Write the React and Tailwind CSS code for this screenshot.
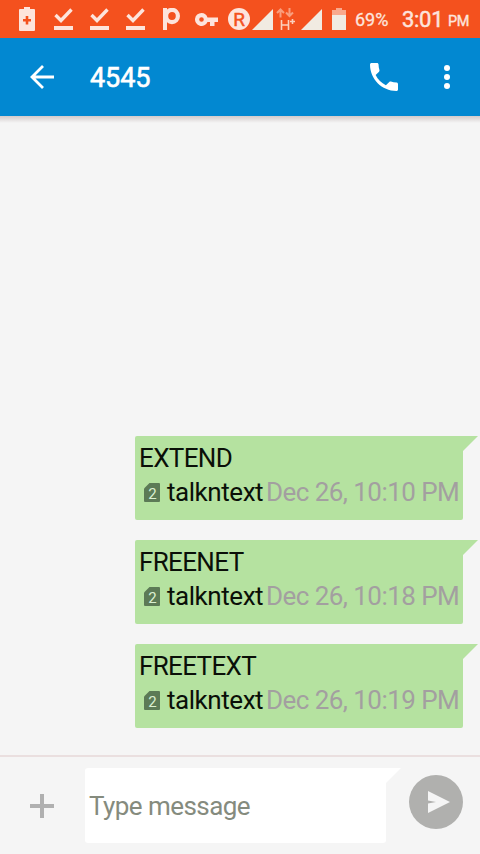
const messages = [
  { id: 1, text: 'EXTEND', sender: 'talkntext', date: 'Dec 26, 10:10 PM' },
  { id: 2, text: 'FREENET', sender: 'talkntext', date: 'Dec 26, 10:18 PM' },
  { id: 3, text: 'FREETEXT', sender: 'talkntext', date: 'Dec 26, 10:19 PM' },
];

function CheckLine({ className }) {
  return (
    <svg viewBox="0 0 20 22" className={`h-[22px] w-5 shrink-0 ${className}`}>
      <path d="M1.5 7l5.5 5.5L17.5 1.5" fill="none" stroke="currentColor" strokeWidth="3.4" />
      <path d="M0 18h19v4H0z" fill="currentColor" />
    </svg>
  );
}

function Signal({ className }) {
  return (
    <svg viewBox="0 0 21 21" className={`h-[21px] w-[21px] shrink-0 ${className}`}>
      <path d="M21 0v21H0z" fill="#f1ebe2" />
    </svg>
  );
}

function StatusBar() {
  return (
    <div className="flex h-[38px] shrink-0 items-center bg-[#f4511e] pl-[19px] text-[#fde4dc]">
      <svg viewBox="0 0 16 24" className="h-6 w-4 shrink-0">
        <path
          fillRule="evenodd"
          fill="currentColor"
          d="M5 0h6v2h4q1 0 1 1v20q0 1-1 1H1q-1 0-1-1V3q0-1 1-1h4zM6.7 9v3H4v2.6h2.7v3h2.6v-3H12V12H9.3V9z"
        />
      </svg>
      <CheckLine className="ml-[19px]" />
      <CheckLine className="ml-4" />
      <CheckLine className="ml-4" />
      <svg viewBox="0 0 17 22" className="ml-[17px] h-[22px] w-[17px] shrink-0">
        <path d="M0 0h4v22H0z" fill="currentColor" />
        <ellipse cx="9" cy="8" rx="5.9" ry="6.2" fill="none" stroke="currentColor" strokeWidth="4.2" />
      </svg>
      <svg viewBox="0 0 23 13" className="ml-[15px] h-[13px] w-[23px] shrink-0">
        <path
          fillRule="evenodd"
          fill="currentColor"
          d="M6.5 0a6.5 6.5 0 1 0 6 9H15v4h4.5V9H23V4.5H12.5a6.5 6.5 0 0 0-6-4.5zM6.5 4.2a2.3 2.3 0 1 1 0 4.6 2.3 2.3 0 0 1 0-4.6z"
        />
      </svg>
      <div className="ml-[10px] flex size-[22px] shrink-0 items-center justify-center rounded-full bg-[#fde4dc] text-[19px] leading-none text-[#f4511e] [-webkit-text-stroke:0.5px]">
        R
      </div>
      <Signal className="ml-[2px]" />
      <svg viewBox="0 0 19 22" className="ml-[3px] h-[22px] w-[19px] shrink-0" fill="none">
        <path d="M4.5 9.5V1.5M1 5l3.5-3.5L8 5M13.5 0v8M10 4.5L13.5 8 17 4.5" stroke="#f99e7e" strokeWidth="2" />
        <path d="M5.5 12v10M12.5 12v10M5.5 17h7M14 13.5h5M16.5 11v5" stroke="#fbd0bd" strokeWidth="1.6" />
      </svg>
      <Signal className="ml-[6px]" />
      <svg viewBox="0 0 14 22" className="ml-[10px] h-[22px] w-[14px] shrink-0">
        <path d="M4 0h6v2h4v6H0V2h4z" fill="#f9a98d" />
        <path d="M0 7h14v15H0z" fill="#f1ebe2" />
      </svg>
      <span className="ml-[9px] w-[38px] shrink-0 pt-px text-[18px] [-webkit-text-stroke:0.3px]">69%</span>
      <span className="ml-[9px] w-[41px] shrink-0 pt-px text-[22px] tracking-[-0.3px] [-webkit-text-stroke:0.5px]">3:01</span>
      <span className="ml-[5px] pt-[6px] text-[14.5px] tracking-[-0.4px] [-webkit-text-stroke:0.4px]">PM</span>
    </div>
  );
}

function AppBar() {
  return (
    <header className="flex h-[78px] shrink-0 items-center bg-[#0288d1] text-white">
      <svg viewBox="0 0 24 24" className="ml-[30px] size-6 shrink-0" fill="none" stroke="currentColor" strokeWidth="2.8">
        <path d="M24 12H2.5M13 1L2 12l11 11" />
      </svg>
      <h1 className="ml-9 flex-1 pt-[2px] text-[27px] tracking-[-0.1px] [-webkit-text-stroke:0.6px]">4545</h1>
      <svg viewBox="3 3 18 18" className="size-7 shrink-0" fill="currentColor">
        <path d="M6.62 10.79c1.44 2.83 3.76 5.14 6.59 6.59l2.2-2.2c.27-.27.67-.36 1.02-.24 1.12.37 2.33.57 3.57.57.55 0 1 .45 1 1V20c0 .55-.45 1-1 1-9.39 0-17-7.61-17-17 0-.55.45-1 1-1h3.5c.55 0 1 .45 1 1 0 1.25.2 2.45.57 3.57.11.35.03.74-.25 1.02l-2.2 2.2z" />
      </svg>
      <svg viewBox="0 0 6 24" className="mr-[30px] ml-[46px] h-6 w-1.5 shrink-0 overflow-visible" fill="currentColor">
        <circle cx="3" cy="3" r="3" />
        <circle cx="3" cy="12" r="3" />
        <circle cx="3" cy="21" r="3" />
      </svg>
    </header>
  );
}

function Message({ message }) {
  return (
    <div className="flex justify-end pr-0.5">
      <div className="h-[84px] w-[328px] rounded-[2px] rounded-tr-none bg-[#b5e2a0] pt-[5px] pl-[4px] text-[26px] leading-[34px] whitespace-nowrap text-[#0a0f08]">
        <p className="tracking-[-0.65px]">{message.text}</p>
        <div className="flex items-center">
          <svg viewBox="0 0 16 19" className="mr-[7px] ml-[5px] h-[19px] w-4 shrink-0">
            <path d="M5.5 0H15q1 0 1 1v17q0 1-1 1H1q-1 0-1-1V5.5z" fill="#5c7a56" />
            <text x="8.5" y="15.5" textAnchor="middle" fontSize="15" fill="#d9efd0">2</text>
          </svg>
          <span className="w-[99px] shrink-0 tracking-[-0.45px]">{message.sender}</span>
          <span className="tracking-[-0.55px] text-[#a39fa0]">{message.date}</span>
        </div>
      </div>
      <svg viewBox="0 0 15 15" className="size-[15px] shrink-0">
        <path d="M0 0h15L0 15z" fill="#b5e2a0" />
      </svg>
    </div>
  );
}

function Composer() {
  return (
    <footer className="flex h-[99px] shrink-0 items-start border-t-2 border-[#eadfdf]">
      <svg viewBox="0 0 24 24" className="mt-[37px] ml-[30px] size-6 shrink-0" fill="#b0b0b0">
        <path d="M10 0h4v10h10v4H14v10h-4V14H0v-4h10z" />
      </svg>
      <div className="mt-[11px] ml-[31px] flex h-[75px] w-[301px] shrink-0 items-center rounded-[3px] rounded-tr-none bg-white pt-[2px] pl-[4px] text-[26px] tracking-[-0.55px] text-[#858b7e]">
        Type message
      </div>
      <svg viewBox="0 0 15 15" className="mt-[11px] size-[15px] shrink-0">
        <path d="M0 0h15L0 15z" fill="#fff" />
      </svg>
      <button className="mt-[18px] ml-[8px] flex size-[54px] shrink-0 items-center justify-center rounded-full bg-[#b0b0ae]">
        <svg viewBox="0 0 22 22" className="ml-[5px] h-[22px] w-[22px]" fill="#f5f5f5">
          <path d="M0 0l22 11L0 22v-9.5l8-1.5-8-1.5z" />
        </svg>
      </button>
    </footer>
  );
}

export default function App() {
  return (
    <div className="flex h-[854px] w-[480px] flex-col overflow-hidden bg-[#f5f5f5] font-['Roboto',sans-serif]">
      <StatusBar />
      <AppBar />
      <div className="h-[7px] shrink-0 bg-linear-to-b from-[#d3cbcb] to-[#f5f5f5]" />
      <main className="flex flex-1 flex-col justify-end gap-5 pb-[27px]">
        {messages.map((message) => (
          <Message key={message.id} message={message} />
        ))}
      </main>
      <Composer />
    </div>
  );
}
